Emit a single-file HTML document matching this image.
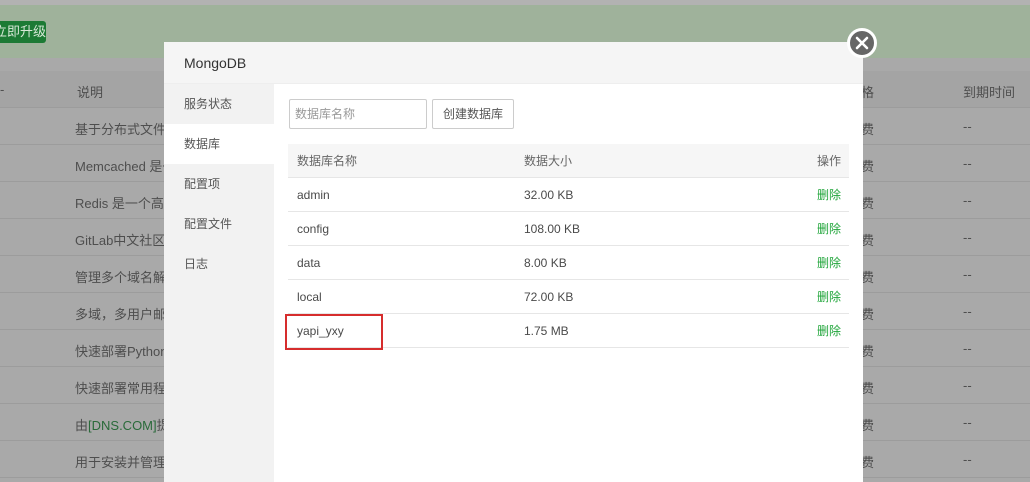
<!DOCTYPE html><html><head><meta charset="utf-8"><style>
*{margin:0;padding:0;box-sizing:border-box}
body{width:1030px;height:482px;overflow:hidden;position:relative;background:#a9a9a9;font-family:"Liberation Sans","Noto Sans CJK SC",sans-serif;font-size:12px;color:#4a4a4a}
.top{position:absolute;left:0;top:0;width:1030px;height:5px;background:#b2b2b2}
.green{position:absolute;left:0;top:5px;width:1030px;height:53px;background:#9fb29b}
.upg{position:absolute;left:-8px;top:21px;width:54px;height:22px;background:#1c7a34;color:#d8e8d8;font-size:13px;line-height:22px;padding-left:2px;border-radius:3px;white-space:nowrap;overflow:hidden}
.bgrow{position:absolute;left:0;width:1030px;height:37px;border-bottom:1px solid #9c9c9c;color:#4e4e4e;font-size:13px;white-space:nowrap}
.bgrow span{position:absolute;top:11px}
.modal{position:absolute;left:164px;top:42px;width:699px;height:440px;background:#fff}
.mh{height:42px;background:#f5f5f5;border-bottom:1px solid #eee;font-size:14px;color:#333;line-height:42px;padding-left:20px}
.side{position:absolute;left:0;top:42px;width:110px;height:398px;background:#f2f2f2}
.side div{height:40px;line-height:40px;padding-left:20px;color:#555}
.side .on{background:#fff}
.inp{position:absolute;left:125px;top:57px;width:138px;height:30px;border:1px solid #ccc;border-radius:2px;color:#999;line-height:28px;padding-left:5px}
.btn{position:absolute;left:268px;top:57px;width:82px;height:30px;border:1px solid #ccc;border-radius:2px;color:#555;line-height:28px;text-align:center}
.tb{position:absolute;left:124px;top:102px;width:561px}
.tr{height:34px;border-bottom:1px solid #e6e6e6;position:relative;line-height:35px}
.tr.h{background:#f6f6f6;color:#666}
.tr span{position:absolute}
.c1{left:9px}.c2{left:236px}.c3{right:8px;color:#20a53a}
.tr.h .c3{color:#666}
.red{position:absolute;left:121px;top:272px;width:98px;height:36px;border:2px solid #d62d2d}
.close{position:absolute;left:847px;top:28px;width:30px;height:30px;border-radius:50%;background:#666;border:3px solid #fff}
</style></head><body>
<div class="top"></div><div class="green"></div><div class="upg">立即升级</div>
<div class="bgrow" style="top:71px;background:#a4a4a4"><span style="left:0">‑</span><span style="left:77px">说明</span><span style="left:861px">格</span><span style="left:963px">到期时间</span></div>
<div class="bgrow" style="top:108px"><span style="left:75px">基于分布式文件存</span><span style="left:861px">费</span><span style="left:963px">--</span></div>
<div class="bgrow" style="top:145px"><span style="left:75px">Memcached 是一</span><span style="left:861px">费</span><span style="left:963px">--</span></div>
<div class="bgrow" style="top:182px"><span style="left:75px">Redis 是一个高性</span><span style="left:861px">费</span><span style="left:963px">--</span></div>
<div class="bgrow" style="top:219px"><span style="left:75px">GitLab中文社区版</span><span style="left:861px">费</span><span style="left:963px">--</span></div>
<div class="bgrow" style="top:256px"><span style="left:75px">管理多个域名解析</span><span style="left:861px">费</span><span style="left:963px">--</span></div>
<div class="bgrow" style="top:293px"><span style="left:75px">多域，多用户邮局</span><span style="left:861px">费</span><span style="left:963px">--</span></div>
<div class="bgrow" style="top:330px"><span style="left:75px">快速部署Python</span><span style="left:861px">费</span><span style="left:963px">--</span></div>
<div class="bgrow" style="top:367px"><span style="left:75px">快速部署常用程序</span><span style="left:861px">费</span><span style="left:963px">--</span></div>
<div class="bgrow" style="top:404px"><span style="left:75px">由<span style="position:static;color:#2a6a3a">[DNS.COM]</span>提</span><span style="left:861px">费</span><span style="left:963px">--</span></div>
<div class="bgrow" style="top:441px"><span style="left:75px">用于安装并管理</span><span style="left:861px">费</span><span style="left:963px">--</span></div>
<div class="modal">
<div class="mh">MongoDB</div>
<div class="side"><div>服务状态</div><div class="on">数据库</div><div>配置项</div><div>配置文件</div><div>日志</div></div>
<div class="inp">数据库名称</div><div class="btn">创建数据库</div>
<div class="tb">
<div class="tr h"><span class="c1">数据库名称</span><span class="c2">数据大小</span><span class="c3">操作</span></div>
<div class="tr"><span class="c1">admin</span><span class="c2">32.00 KB</span><span class="c3">删除</span></div>
<div class="tr"><span class="c1">config</span><span class="c2">108.00 KB</span><span class="c3">删除</span></div>
<div class="tr"><span class="c1">data</span><span class="c2">8.00 KB</span><span class="c3">删除</span></div>
<div class="tr"><span class="c1">local</span><span class="c2">72.00 KB</span><span class="c3">删除</span></div>
<div class="tr"><span class="c1">yapi_yxy</span><span class="c2">1.75 MB</span><span class="c3">删除</span></div>
</div>
<div class="red"></div>
</div>
<div class="close"><svg width="24" height="24" viewBox="0 0 24 24"><path d="M7 7L17 17M17 7L7 17" stroke="#fff" stroke-width="2.6" stroke-linecap="round"/></svg></div>
</body></html>
